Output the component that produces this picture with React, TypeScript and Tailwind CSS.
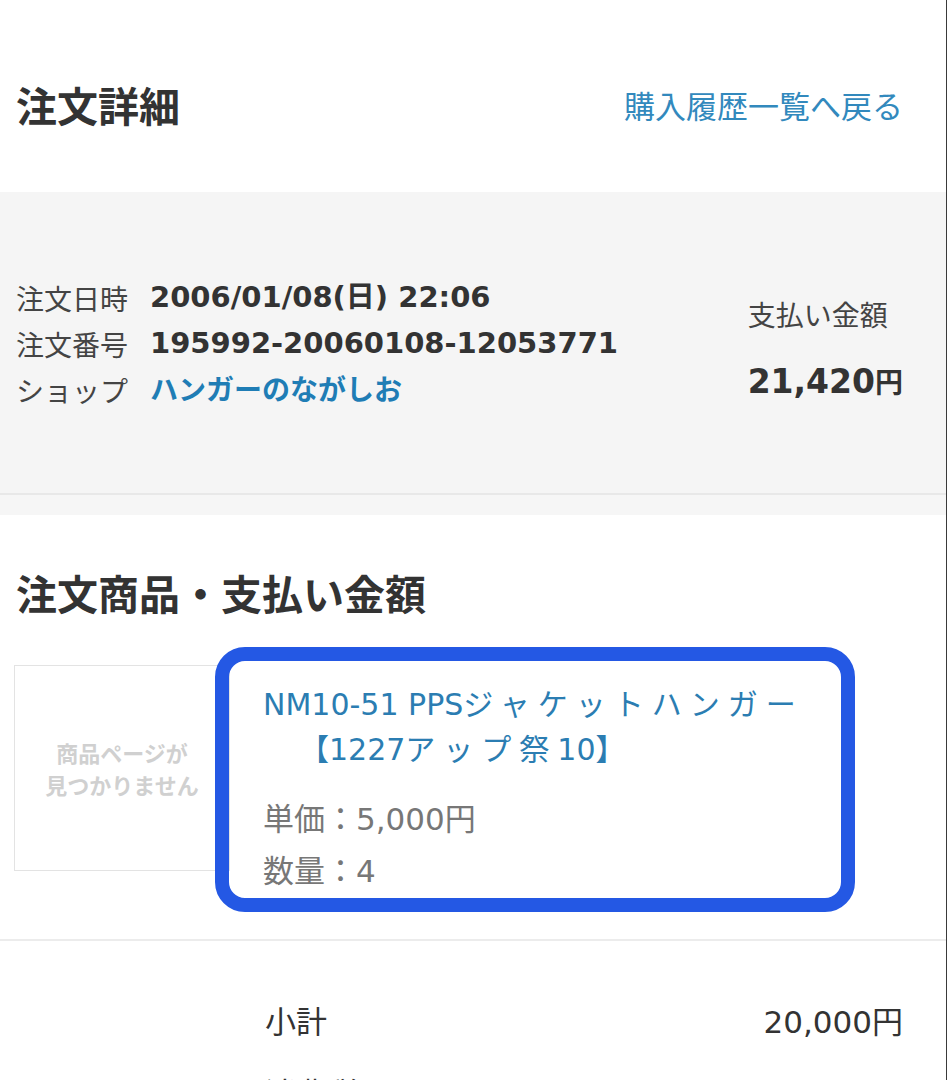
import React from 'react';

const font = "font-['DejaVu_Sans','Noto_Sans_CJK_JP',sans-serif]";
const cjk = "font-['Noto_Sans_CJK_JP',sans-serif]";

function InfoRow({ label, children }: { label: string; children: React.ReactNode }) {
  return (
    <div className="flex items-center h-[46px]">
      <span className={`w-[134px] shrink-0 text-[28px] text-[#444] ${cjk}`}>{label}</span>
      <span className="text-[29px] font-bold text-[#333]">{children}</span>
    </div>
  );
}

function SummaryRow({ label, value }: { label: string; value: string }) {
  return (
    <div className="flex items-center justify-between h-[58px] pl-[249px]">
      <span className="text-[31px] text-[#333]">{label}</span>
      <span className="text-[31px] text-[#333]">{value}</span>
    </div>
  );
}

export default function App() {
  return (
    <div className={`w-[947px] h-[1080px] overflow-hidden bg-white border-r border-[#3a3a3a] ${font}`}>
      {/* Header */}
      <div className="h-[192px] flex items-center justify-between pl-4 pr-[43px] pt-[18px]">
        <h1 className={`text-[41px] font-bold text-[#333] ${cjk}`}>注文詳細</h1>
        <a className={`text-[31px] text-[#3289bd] ${cjk}`}>購入履歴一覧へ戻る</a>
      </div>

      {/* Order info */}
      <div className="bg-[#f5f5f5] h-[301px] flex items-center justify-between pl-4 pr-[43px]">
        <div className="pt-[2px]">
          <InfoRow label="注文日時">2006/01/08(日) 22:06</InfoRow>
          <InfoRow label="注文番号">195992-20060108-12053771</InfoRow>
          <InfoRow label="ショップ">
            <span className={`text-[#1f7db5] text-[28px] ${cjk}`}>ハンガーのながしお</span>
          </InfoRow>
        </div>
        <div className="flex flex-col pt-[6px] whitespace-nowrap">
          <span className={`text-[28px] text-[#444] ${cjk}`}>支払い金額</span>
          <span className="mt-[30px] text-[#333] font-bold text-[33px] leading-none">
            21,420<span className={`text-[28px] ${cjk}`}>円</span>
          </span>
        </div>
      </div>
      <div className="h-[2px] bg-[#e8e8e8]" />
      <div className="h-[20px] bg-[#f6f6f6]" />

      {/* Products */}
      <div className="pl-4 pr-[43px]">
        <h2 className={`pt-[52px] text-[41px] font-bold text-[#333] leading-[50px] ${cjk}`}>
          注文商品・支払い金額
        </h2>

        <div className="relative mt-[48px] flex gap-[33px]">
          <div className="w-[216px] h-[206px] shrink-0 -ml-[2px] border border-[#e3e3e3] flex items-center justify-center">
            <p className={`text-center text-[22px] leading-[32px] font-bold text-[#d0d0d0] ${cjk}`}>
              商品ページが
              <br />
              見つかりません
            </p>
          </div>
          <div className="flex-1 pt-[16px]">
            <a className="block text-[30px] leading-[43px] text-[#2b7db2]">
              NM10-51 PPS<span className={`tracking-[8px] ${cjk}`}>ジャケットハンガー</span>
              <br />
              <span className="pl-[36px]">
                <span className={cjk}>【</span>1227<span className={`tracking-[8px] ${cjk}`}>アップ祭</span>10
                <span className={cjk}>】</span>
              </span>
            </a>
            <p className="mt-[22px] text-[31px] leading-[52px] text-[#777]">単価：5,000円</p>
            <p className="text-[31px] leading-[52px] text-[#777]">数量：4</p>
          </div>

          {/* highlight annotation */}
          <div className="absolute left-[199px] -top-[18px] w-[640px] h-[265px] rounded-[30px] border-[14px] border-[#2458e4] pointer-events-none" />
        </div>
      </div>

      <div className="mt-[42px] h-[2px] bg-[#ececec]" />

      <div className="pl-4 pr-[43px] pt-[52px] flex flex-col gap-[14px]">
        <SummaryRow label="小計" value="20,000円" />
        <SummaryRow label="消費税" value="1,000円" />
      </div>
    </div>
  );
}
